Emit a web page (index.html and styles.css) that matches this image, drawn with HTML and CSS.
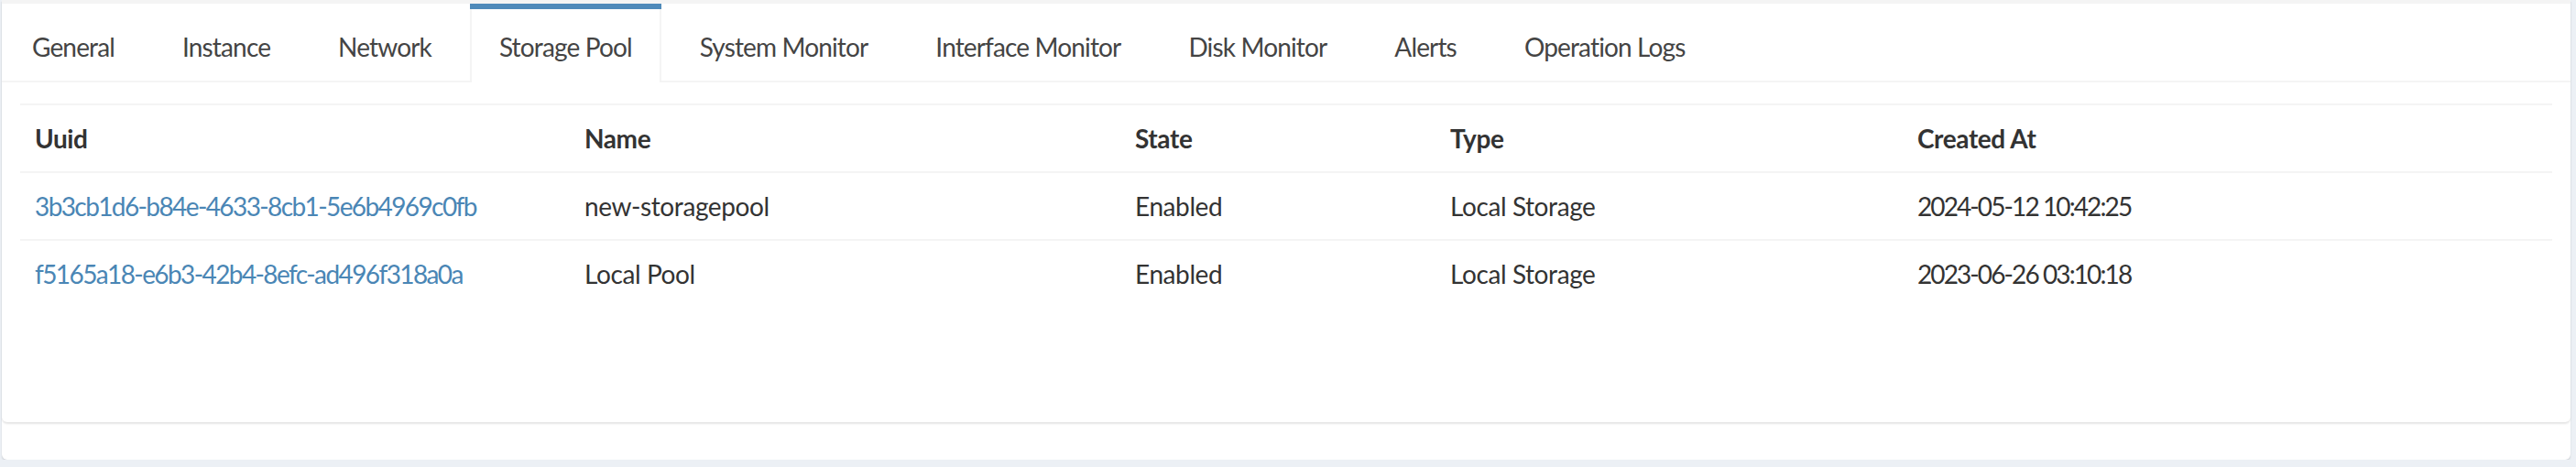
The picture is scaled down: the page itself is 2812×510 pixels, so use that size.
FILE: index.html
```html
<!DOCTYPE html>
<html lang="en">
<head>
<meta charset="utf-8">
<title>Storage Pool</title>
<link rel="stylesheet" href="styles.css">
</head>
<body>
<div class="box">
  <div class="tabs-card">
    <ul class="nav-tabs">
      <li><a>General</a></li>
      <li><a>Instance</a></li>
      <li><a>Network</a></li>
      <li class="active"><a>Storage Pool</a></li>
      <li><a>System Monitor</a></li>
      <li><a>Interface Monitor</a></li>
      <li><a>Disk Monitor</a></li>
      <li><a>Alerts</a></li>
      <li><a>Operation Logs</a></li>
    </ul>
    <div class="tab-content">
      <table class="table">
        <colgroup>
          <col class="c-uuid">
          <col class="c-name">
          <col class="c-state">
          <col class="c-type">
          <col class="c-created">
        </colgroup>
        <thead>
          <tr><th>Uuid</th><th>Name</th><th>State</th><th>Type</th><th>Created At</th></tr>
        </thead>
        <tbody>
          <tr>
            <td><a class="link num">3b3cb1d6-b84e-4633-8cb1-5e6b4969c0fb</a></td>
            <td>new-storagepool</td>
            <td>Enabled</td>
            <td>Local Storage</td>
            <td class="num date">2024-05-12 10:42:25</td>
          </tr>
          <tr>
            <td><a class="link num">f5165a18-e6b3-42b4-8efc-ad496f318a0a</a></td>
            <td>Local Pool</td>
            <td>Enabled</td>
            <td>Local Storage</td>
            <td class="num date">2023-06-26 03:10:18</td>
          </tr>
        </tbody>
      </table>
    </div>
  </div>
  <div class="box-footer"></div>
</div>
</body>
</html>
```
FILE: styles.css
```css
html, body {
  margin: 0;
  padding: 0;
}
body {
  background: #ecf0f5;
  font-family: Lato, "Open Sans", "Liberation Sans", sans-serif;
  font-size: 28px;
  line-height: 40px;
  color: #333;
  letter-spacing: -0.4px;
}
.box {
  margin-left: 2px;
  width: 2804px;
  height: 502px;
  background: #fff;
  border-radius: 0 0 6px 6px;
  box-shadow: 0 2px 2px rgba(0, 0, 0, 0.12);
  display: flex;
  flex-direction: column;
}
.tabs-card {
  box-sizing: border-box;
  height: 461px;
  border-top: 4px solid #f4f4f4;
  background: #fff;
  border-radius: 0 0 6px 6px;
  box-shadow: 0 2px 2px rgba(0, 0, 0, 0.1);
}
.box-footer {
  flex: 1;
}
.nav-tabs {
  list-style: none;
  margin: 0;
  padding: 0 0 0 1px;
  display: flex;
  border-bottom: 2px solid #f4f4f4;
}
.nav-tabs li {
  border-top: 6px solid transparent;
  margin-bottom: -2px;
  margin-right: 10px;
}
.nav-tabs li a {
  display: block;
  padding: 21px 30px 19px;
  border-left: 2px solid transparent;
  border-right: 2px solid transparent;
  color: #444;
  white-space: nowrap;
  letter-spacing: -0.85px;
}
.nav-tabs li.active {
  border-top-color: #4f8aba;
}
.nav-tabs li.active a {
  background: #fff;
  border-left-color: #f4f4f4;
  border-right-color: #f4f4f4;
  color: #444;
}
.tab-content {
  padding: 23px 20px 20px;
}
.table {
  width: 100%;
  table-layout: fixed;
  border-collapse: collapse;
}
.c-uuid { width: 600px; }
.c-name { width: 601px; }
.c-state { width: 344px; }
.c-type { width: 510px; }
.table th,
.table td {
  padding: 16px;
  text-align: left;
  vertical-align: top;
  border-top: 2px solid #f4f4f4;
  white-space: nowrap;
}
.table th {
  font-weight: 700;
  color: #333;
  border-bottom: 2px solid #f4f4f4;
}
.link {
  color: #4a86b5;
}
.num {
  letter-spacing: -1.6px;
}
.date {
  letter-spacing: -1.9px;
}
```
